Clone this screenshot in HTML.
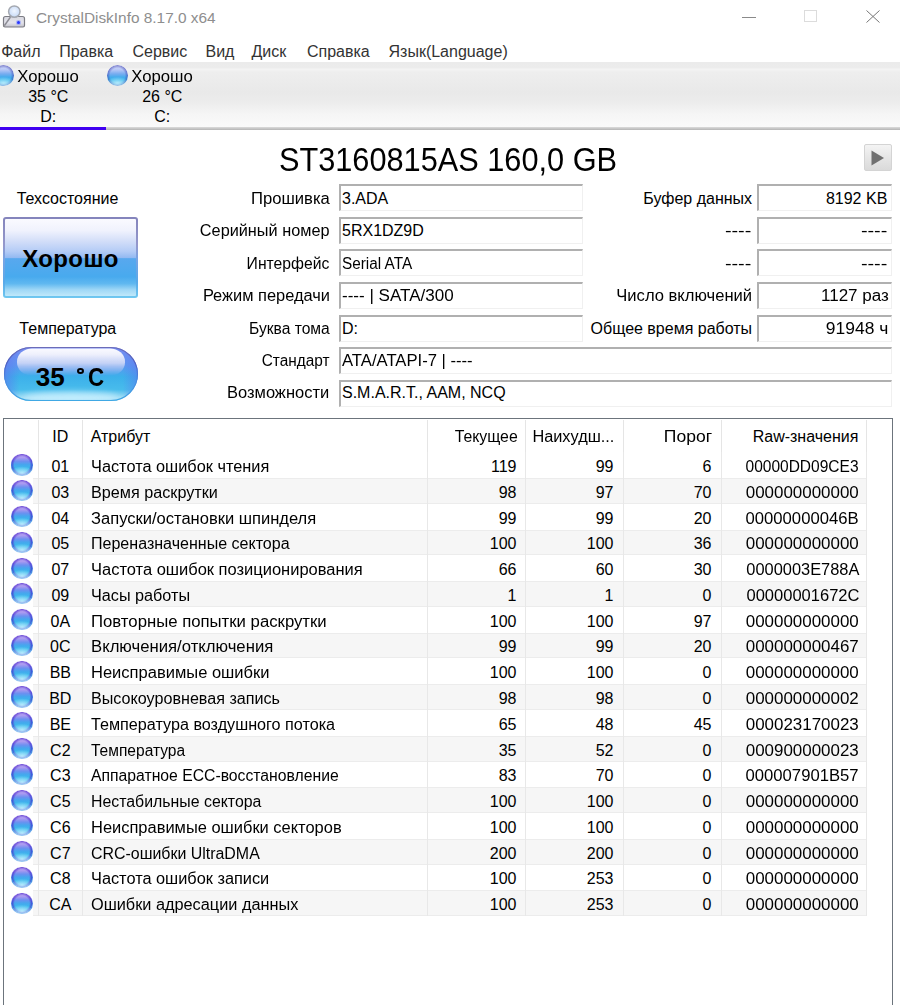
<!DOCTYPE html>
<html><head><meta charset="utf-8"><style>
html,body{margin:0;padding:0;}
body{width:900px;height:1005px;overflow:hidden;position:relative;background:#fff;font-family:"Liberation Sans", sans-serif;}
.t{position:absolute;white-space:pre;}
.r{position:absolute;}
.ball{position:absolute;border-radius:50%;box-sizing:border-box;
 background:radial-gradient(ellipse 55% 30% at 50% 86%, rgba(200,242,255,0.85), rgba(200,242,255,0) 100%),
 radial-gradient(circle closest-side at 50% 48%, rgba(70,30,200,0) 72%, rgba(70,30,200,0.6) 96%, rgba(70,30,200,0.3) 100%),
 linear-gradient(#d0bcf8 0%,#a898f0 18%,#6c90f0 34%,#46a6ee 48%,#3cb8ec 64%,#50c4f0 82%,#80d4f4 100%);}
.tball{position:absolute;width:21px;height:21px;border-radius:50%;
 background:radial-gradient(ellipse 55% 30% at 50% 86%, rgba(200,242,255,0.8), rgba(200,242,255,0) 100%),
 radial-gradient(circle closest-side at 50% 50%, rgba(60,60,170,0) 70%, rgba(60,60,170,0.5) 95%, rgba(60,60,170,0.2) 100%),
 linear-gradient(#d4dafa 0%,#b8c8f6 22%,#78acf0 42%,#44acec 58%,#3cb8ec 72%,#60c8f0 88%,#90d8f4 100%);}
.box{position:absolute;height:27px;box-sizing:border-box;border-top:2px solid #b0b0b0;border-left:2px solid #b0b0b0;border-right:1px solid #f0f0f0;border-bottom:1px solid #f0f0f0;}
.health{position:absolute;left:3px;top:217px;width:135px;height:81px;box-sizing:border-box;border-radius:3px;
 background:linear-gradient(#8484bc 0%,#9498cc 35%,#78a4e4 52%,#58a8e8 80%,#70c8f0 100%);}
.health::after{content:"";position:absolute;left:2px;top:2px;right:2px;bottom:2px;border-radius:1px;
 background:linear-gradient(#fafaff 0%,#f0f2fd 15%,#d0dcf8 30%,#b4ccf6 42%,#94baf2 50%,#58a8ee 51.5%,#48aaee 75%,#60b8f0 84%,#a0d8f6 92%,#c0e8fa 100%);}
.pill{position:absolute;left:4px;top:347px;width:134px;height:53px;box-sizing:border-box;border-radius:27px;overflow:hidden;
 border:1px solid #6060c8;border-bottom-color:#50b0e8;
 background:radial-gradient(ellipse 70% 45% at 50% 100%, rgba(190,235,250,0.95), rgba(190,235,250,0) 100%),linear-gradient(90deg, rgba(100,100,240,0.55) 0%, rgba(100,100,240,0) 20%, rgba(100,100,240,0) 80%, rgba(100,100,240,0.45) 100%), linear-gradient(#8a9cf0 0%,#6aa0f0 35%,#3cb4ea 55%,#48c0ec 75%,#a0dcf6 100%);}
.pill .hl{position:absolute;left:14px;top:2px;width:104px;height:24px;border-radius:0 0 52px 52px / 0 0 20px 20px;
 background:linear-gradient(#f8f8ff 0%,#e8ecfc 40%,#b8ccf6 100%);border-radius:40px 40px 60px 60px/ 12px 12px 16px 16px;}
.band{position:absolute;left:32.5px;width:834px;box-sizing:border-box;background:#f6f6f6;border-top:1px solid #ececec;border-bottom:1px solid #ececec;}
</style></head><body>
<svg class="r" style="left:0;top:0" width="30" height="32" viewBox="0 0 30 32">
<defs>
<linearGradient id="dk" x1="0" y1="0" x2="0" y2="1"><stop offset="0" stop-color="#d8d8e0"/><stop offset="0.6" stop-color="#e4e4ec"/><stop offset="1" stop-color="#c0c0c8"/></linearGradient>
<radialGradient id="gl" cx="0.5" cy="0.45" r="0.6"><stop offset="0" stop-color="#f0f6ff"/><stop offset="0.7" stop-color="#d0e0f8"/><stop offset="1" stop-color="#b0c8ec"/></radialGradient>
</defs>
<path d="M3.5 18.5 Q3.5 16.5 5.5 16.5 L22.5 16.5 Q24.5 16.5 24.5 18.5 L24.5 25.5 Q24.5 27 23 27 L5 27 Q3.5 27 3.5 25.5 Z" fill="url(#dk)" stroke="#7c7c84" stroke-width="1.2"/>
<path d="M4 25 L4 27" stroke="#888" stroke-width="1"/>
<path d="M4.5 25.5 L10.5 17" stroke="#8c8c94" stroke-width="1.4"/>
<circle cx="14.3" cy="11.6" r="5.7" fill="url(#gl)" stroke="#a4a8b0" stroke-width="1.5"/>
<circle cx="18.5" cy="22.5" r="2.6" fill="#7080ff" opacity="0.45"/>
<circle cx="18.5" cy="22.5" r="1.5" fill="#2838ff"/>
</svg>
<div class="t" style="top:10.46px;font-size:15.4px;line-height:15.4px;color:#8e8e8e;left:36.00px;">CrystalDiskInfo 8.17.0 x64</div>
<div class="r" style="left:742px;top:16.5px;width:14px;height:1px;background:#8a8a8a"></div>
<div class="r" style="left:804px;top:10px;width:13px;height:12px;border:1px solid #dcdcdc;box-sizing:border-box"></div>
<svg class="r" style="left:866px;top:10px" width="14" height="13" viewBox="0 0 14 13"><path d="M0.5 0.5 L13.5 12.5 M13.5 0.5 L0.5 12.5" stroke="#777" stroke-width="1"/></svg>
<div class="t" style="top:43.95px;font-size:16px;line-height:16px;color:#333;left:1.20px;">Файл</div>
<div class="t" style="top:43.95px;font-size:16px;line-height:16px;color:#333;left:59.20px;">Правка</div>
<div class="t" style="top:43.95px;font-size:16px;line-height:16px;color:#333;left:132.50px;">Сервис</div>
<div class="t" style="top:43.95px;font-size:16px;line-height:16px;color:#333;left:205.50px;">Вид</div>
<div class="t" style="top:43.95px;font-size:16px;line-height:16px;color:#333;left:251.50px;">Диск</div>
<div class="t" style="top:43.95px;font-size:16px;line-height:16px;color:#333;left:307.00px;">Справка</div>
<div class="t" style="top:43.95px;font-size:16px;line-height:16px;color:#333;left:388.50px;">Язык(Language)</div>
<div class="r" style="left:0px;top:62px;width:900px;height:65px;background:linear-gradient(#ebebeb 0px,#ececec 6px,#f4f4f4 7px,#eeeeee 10px,#e9e9e9 30px,#ececec 40px,#f5f5f5 52px,#fafafa 65px)"></div>
<div class="r" style="left:0px;top:127px;width:900px;height:3px;background:linear-gradient(#dcdcdc,#b4b4b4)"></div>
<div class="r" style="left:0px;top:127px;width:106px;height:3px;background:#4000f0"></div>
<div class="t" style="top:68.95px;font-size:16px;line-height:16px;color:#000;left:-251.70px;width:600px;text-align:center;transform:scaleX(1.045);">Хорошо</div>
<div class="t" style="top:88.95px;font-size:16px;line-height:16px;color:#000;left:-251.70px;width:600px;text-align:center;">35 °C</div>
<div class="t" style="top:108.95px;font-size:16px;line-height:16px;color:#000;left:-251.70px;width:600px;text-align:center;">D:</div>
<div class="t" style="top:68.95px;font-size:16px;line-height:16px;color:#000;left:-137.70px;width:600px;text-align:center;transform:scaleX(1.045);">Хорошо</div>
<div class="t" style="top:88.95px;font-size:16px;line-height:16px;color:#000;left:-137.70px;width:600px;text-align:center;">26 °C</div>
<div class="t" style="top:108.95px;font-size:16px;line-height:16px;color:#000;left:-137.70px;width:600px;text-align:center;">C:</div>
<div class="tball" style="left:-7.5px;top:65.3px"></div>
<div class="tball" style="left:106.5px;top:65.3px"></div>
<div class="t" style="top:143.14px;font-size:33.5px;line-height:33.5px;color:#000;left:147.50px;width:600px;text-align:center;transform:scaleX(0.917);">ST3160815AS 160,0 GB</div>
<div class="r" style="left:864px;top:144px;width:28px;height:27px;border:1px solid #d4d4d4;border-radius:2px;box-sizing:border-box;background:linear-gradient(#f4f4f4,#e6e6e6 50%,#dadada)"></div>
<svg class="r" style="left:864px;top:144px" width="28" height="27"><path d="M7.5 6.5 L20 14 L7.5 21.5 Z" fill="#707070"/></svg>
<div class="t" style="top:190.95px;font-size:16px;line-height:16px;color:#000;left:-232.50px;width:600px;text-align:center;">Техсостояние</div>
<div class="health"></div>
<div class="t" style="top:247.18px;font-size:24px;line-height:24px;color:#000;font-weight:bold;letter-spacing:0.4px;left:-229.50px;width:600px;text-align:center;">Хорошо</div>
<div class="t" style="top:320.95px;font-size:16px;line-height:16px;color:#000;left:-232.20px;width:600px;text-align:center;">Температура</div>
<svg class="r" style="left:3px;top:346px" width="136" height="56" viewBox="0 0 136 56">
<defs>
<linearGradient id="pb" x1="0" y1="0" x2="0" y2="1">
 <stop offset="0" stop-color="#7888f0"/><stop offset="0.35" stop-color="#5c98f0"/><stop offset="0.55" stop-color="#3cb0ea"/><stop offset="0.78" stop-color="#48bcec"/><stop offset="0.93" stop-color="#a8e0f6"/><stop offset="1" stop-color="#70c4f0"/>
</linearGradient>
<linearGradient id="ps" x1="0" y1="0" x2="1" y2="0">
 <stop offset="0" stop-color="#6070f0" stop-opacity="0.6"/><stop offset="0.12" stop-color="#6070f0" stop-opacity="0"/><stop offset="0.88" stop-color="#6070f0" stop-opacity="0"/><stop offset="1" stop-color="#6070f0" stop-opacity="0.5"/>
</linearGradient>
<linearGradient id="ph" x1="0" y1="0" x2="0" y2="1">
 <stop offset="0" stop-color="#fafaff"/><stop offset="0.22" stop-color="#eef0fc"/><stop offset="0.55" stop-color="#c8d4f6" stop-opacity="0.95"/><stop offset="0.8" stop-color="#a0bef2" stop-opacity="0.6"/><stop offset="1" stop-color="#90b8f0" stop-opacity="0"/>
</linearGradient>
<linearGradient id="pst" x1="0" y1="0" x2="0" y2="1">
 <stop offset="0" stop-color="#6c6cb8"/><stop offset="0.3" stop-color="#5060c0"/><stop offset="0.6" stop-color="#4c88e0"/><stop offset="1" stop-color="#40a8e4"/>
</linearGradient>
<filter id="bl" x="-10%" y="-30%" width="120%" height="160%"><feGaussianBlur stdDeviation="0.7"/></filter>
<filter id="bl2" x="-20%" y="-50%" width="140%" height="200%"><feGaussianBlur stdDeviation="3"/></filter>
<clipPath id="pc"><rect x="1" y="1" width="134" height="54" rx="27" ry="27"/></clipPath>
</defs>
<g clip-path="url(#pc)">
<rect x="0" y="0" width="136" height="56" fill="url(#pb)"/>
<rect x="0" y="0" width="136" height="56" fill="url(#ps)"/>
<ellipse cx="68" cy="52" rx="48" ry="6" fill="#c8f0ff" opacity="0.8" filter="url(#bl2)"/>
<rect x="14" y="2.5" width="108" height="27" rx="15" ry="13" fill="url(#ph)" filter="url(#bl)"/>
</g>
<rect x="1.5" y="1.5" width="133" height="53" rx="26.5" ry="26.5" fill="none" stroke="url(#pst)" stroke-width="1.1"/>
</svg>
<div class="t" style="top:364.09px;font-size:26px;line-height:26px;color:#000;font-weight:bold;left:35.80px;">35</div>
<div class="r" style="left:77px;top:367.6px;width:7.4px;height:6.6px;border:2px solid #000;border-radius:50%;box-sizing:border-box"></div>
<div class="t" style="top:364.09px;font-size:26px;line-height:26px;color:#000;font-weight:bold;left:87.60px;transform:scaleX(0.86);transform-origin:0 0;">C</div>
<div class="t" style="top:190.95px;font-size:16px;line-height:16px;color:#000;right:570.50px;transform:scaleX(1.039);transform-origin:100% 0;">Прошивка</div>
<div class="box" style="left:339px;top:184.20px;width:244px"></div>
<div class="t" style="top:190.95px;font-size:16px;line-height:16px;color:#000;left:342.00px;">3.ADA</div>
<div class="t" style="top:190.95px;font-size:16px;line-height:16px;color:#000;right:147.90px;transform:scaleX(1.0);transform-origin:100% 0;">Буфер данных</div>
<div class="box" style="left:757px;top:184.20px;width:135px"></div>
<div class="t" style="top:190.95px;font-size:16px;line-height:16px;color:#000;right:12.70px;transform:scaleX(1);transform-origin:100% 0;">8192 KB</div>
<div class="t" style="top:223.35px;font-size:16px;line-height:16px;color:#000;right:570.50px;transform:scaleX(1.017);transform-origin:100% 0;">Серийный номер</div>
<div class="box" style="left:339px;top:216.80px;width:244px"></div>
<div class="t" style="top:223.35px;font-size:16px;line-height:16px;color:#000;left:342.00px;">5RX1DZ9D</div>
<div class="t" style="top:223.35px;font-size:16px;line-height:16px;color:#000;right:148.40px;transform:scaleX(1.24);transform-origin:100% 0;">----</div>
<div class="box" style="left:757px;top:216.80px;width:135px"></div>
<div class="t" style="top:223.35px;font-size:16px;line-height:16px;color:#000;right:12.50px;transform:scaleX(1.24);transform-origin:100% 0;">----</div>
<div class="t" style="top:255.75px;font-size:16px;line-height:16px;color:#000;right:570.50px;transform:scaleX(0.981);transform-origin:100% 0;">Интерфейс</div>
<div class="box" style="left:339px;top:249.40px;width:244px"></div>
<div class="t" style="top:255.75px;font-size:16px;line-height:16px;color:#000;left:342.00px;transform:scaleX(0.958);transform-origin:0 0;">Serial ATA</div>
<div class="t" style="top:255.75px;font-size:16px;line-height:16px;color:#000;right:148.40px;transform:scaleX(1.24);transform-origin:100% 0;">----</div>
<div class="box" style="left:757px;top:249.40px;width:135px"></div>
<div class="t" style="top:255.75px;font-size:16px;line-height:16px;color:#000;right:12.50px;transform:scaleX(1.24);transform-origin:100% 0;">----</div>
<div class="t" style="top:288.15px;font-size:16px;line-height:16px;color:#000;right:570.50px;transform:scaleX(1.025);transform-origin:100% 0;">Режим передачи</div>
<div class="box" style="left:339px;top:282.00px;width:244px"></div>
<div class="t" style="top:288.15px;font-size:16px;line-height:16px;color:#000;left:342.00px;transform:scaleX(1.064);transform-origin:0 0;">---- | SATA/300</div>
<div class="t" style="top:288.15px;font-size:16px;line-height:16px;color:#000;right:147.90px;transform:scaleX(1.036);transform-origin:100% 0;">Число включений</div>
<div class="box" style="left:757px;top:282.00px;width:135px"></div>
<div class="t" style="top:288.15px;font-size:16px;line-height:16px;color:#000;right:11.70px;transform:scaleX(1.063);transform-origin:100% 0;">1127 раз</div>
<div class="t" style="top:320.55px;font-size:16px;line-height:16px;color:#000;right:570.50px;transform:scaleX(0.976);transform-origin:100% 0;">Буква тома</div>
<div class="box" style="left:339px;top:314.60px;width:244px"></div>
<div class="t" style="top:320.55px;font-size:16px;line-height:16px;color:#000;left:342.00px;">D:</div>
<div class="t" style="top:320.55px;font-size:16px;line-height:16px;color:#000;right:147.90px;transform:scaleX(1.0);transform-origin:100% 0;">Общее время работы</div>
<div class="box" style="left:757px;top:314.60px;width:135px"></div>
<div class="t" style="top:320.55px;font-size:16px;line-height:16px;color:#000;right:11.70px;transform:scaleX(1.09);transform-origin:100% 0;">91948 ч</div>
<div class="t" style="top:352.95px;font-size:16px;line-height:16px;color:#000;right:570.50px;transform:scaleX(0.961);transform-origin:100% 0;">Стандарт</div>
<div class="box" style="left:339px;top:347.20px;width:553px"></div>
<div class="t" style="top:352.95px;font-size:16px;line-height:16px;color:#000;left:342.00px;transform:scaleX(1.04);transform-origin:0 0;">ATA/ATAPI-7 | ----</div>
<div class="t" style="top:385.35px;font-size:16px;line-height:16px;color:#000;right:570.50px;transform:scaleX(1.03);transform-origin:100% 0;">Возможности</div>
<div class="box" style="left:339px;top:379.80px;width:553px"></div>
<div class="t" style="top:385.35px;font-size:16px;line-height:16px;color:#000;left:342.00px;">S.M.A.R.T., AAM, NCQ</div>
<div class="r" style="left:3px;top:418px;width:890px;height:600px;border:1px solid #6c747c;box-sizing:border-box;border-bottom:none"></div>
<div class="r" style="left:38px;top:420px;width:1px;height:32px;background:#e5e5e5"></div>
<div class="r" style="left:81.5px;top:420px;width:1px;height:32px;background:#e5e5e5"></div>
<div class="r" style="left:427px;top:420px;width:1px;height:32px;background:#e5e5e5"></div>
<div class="r" style="left:524.5px;top:420px;width:1px;height:32px;background:#e5e5e5"></div>
<div class="r" style="left:622.5px;top:420px;width:1px;height:32px;background:#e5e5e5"></div>
<div class="r" style="left:720.5px;top:420px;width:1px;height:32px;background:#e5e5e5"></div>
<div class="r" style="left:866px;top:420px;width:1px;height:32px;background:#e5e5e5"></div>
<div class="t" style="top:428.95px;font-size:16px;line-height:16px;color:#000;left:-239.70px;width:600px;text-align:center;">ID</div>
<div class="t" style="top:428.95px;font-size:16px;line-height:16px;color:#000;left:90.70px;">Атрибут</div>
<div class="t" style="top:428.95px;font-size:16px;line-height:16px;color:#000;right:382.70px;transform:scaleX(0.99);transform-origin:100% 0;">Текущее</div>
<div class="t" style="top:428.95px;font-size:16px;line-height:16px;color:#000;right:285.40px;transform:scaleX(1.02);transform-origin:100% 0;">Наихудш...</div>
<div class="t" style="top:428.95px;font-size:16px;line-height:16px;color:#000;right:187.70px;transform:scaleX(1.095);transform-origin:100% 0;">Порог</div>
<div class="t" style="top:428.95px;font-size:16px;line-height:16px;color:#000;right:41.60px;">Raw-значения</div>
<div class="r" style="left:38px;top:452.20px;width:1px;height:25.78px;background:#e8e8e8"></div>
<div class="r" style="left:81.5px;top:452.20px;width:1px;height:25.78px;background:#e8e8e8"></div>
<div class="r" style="left:427px;top:452.20px;width:1px;height:25.78px;background:#e8e8e8"></div>
<div class="r" style="left:524.5px;top:452.20px;width:1px;height:25.78px;background:#e8e8e8"></div>
<div class="r" style="left:622.5px;top:452.20px;width:1px;height:25.78px;background:#e8e8e8"></div>
<div class="r" style="left:720.5px;top:452.20px;width:1px;height:25.78px;background:#e8e8e8"></div>
<div class="r" style="left:866px;top:452.20px;width:1px;height:25.78px;background:#e8e8e8"></div>
<div class="ball" style="left:11.35px;top:454.39px;width:21.2px;height:21.2px"></div>
<div class="t" style="top:458.95px;font-size:16px;line-height:16px;color:#000;left:-239.70px;width:600px;text-align:center;">01</div>
<div class="t" style="top:458.95px;font-size:16px;line-height:16px;color:#000;left:90.70px;transform:scaleX(1.0202);transform-origin:0 0;">Частота ошибок чтения</div>
<div class="t" style="top:458.95px;font-size:16px;line-height:16px;color:#000;right:383.50px;">119</div>
<div class="t" style="top:458.95px;font-size:16px;line-height:16px;color:#000;right:286.50px;">99</div>
<div class="t" style="top:458.95px;font-size:16px;line-height:16px;color:#000;right:188.50px;">6</div>
<div class="t" style="top:458.95px;font-size:16px;line-height:16px;color:#000;right:41.00px;transform:scaleX(0.9698);transform-origin:100% 0;">00000DD09CE3</div>
<div class="band" style="top:477.98px;height:25.78px"></div>
<div class="r" style="left:38px;top:477.98px;width:1px;height:25.78px;background:#e8e8e8"></div>
<div class="r" style="left:81.5px;top:477.98px;width:1px;height:25.78px;background:#e8e8e8"></div>
<div class="r" style="left:427px;top:477.98px;width:1px;height:25.78px;background:#e8e8e8"></div>
<div class="r" style="left:524.5px;top:477.98px;width:1px;height:25.78px;background:#e8e8e8"></div>
<div class="r" style="left:622.5px;top:477.98px;width:1px;height:25.78px;background:#e8e8e8"></div>
<div class="r" style="left:720.5px;top:477.98px;width:1px;height:25.78px;background:#e8e8e8"></div>
<div class="r" style="left:866px;top:477.98px;width:1px;height:25.78px;background:#e8e8e8"></div>
<div class="ball" style="left:11.35px;top:480.17px;width:21.2px;height:21.2px"></div>
<div class="t" style="top:484.73px;font-size:16px;line-height:16px;color:#000;left:-239.70px;width:600px;text-align:center;">03</div>
<div class="t" style="top:484.73px;font-size:16px;line-height:16px;color:#000;left:90.70px;transform:scaleX(1.0122);transform-origin:0 0;">Время раскрутки</div>
<div class="t" style="top:484.73px;font-size:16px;line-height:16px;color:#000;right:383.50px;">98</div>
<div class="t" style="top:484.73px;font-size:16px;line-height:16px;color:#000;right:286.50px;">97</div>
<div class="t" style="top:484.73px;font-size:16px;line-height:16px;color:#000;right:188.50px;">70</div>
<div class="t" style="top:484.73px;font-size:16px;line-height:16px;color:#000;right:41.00px;transform:scaleX(1.0582);transform-origin:100% 0;">000000000000</div>
<div class="r" style="left:38px;top:503.76px;width:1px;height:25.78px;background:#e8e8e8"></div>
<div class="r" style="left:81.5px;top:503.76px;width:1px;height:25.78px;background:#e8e8e8"></div>
<div class="r" style="left:427px;top:503.76px;width:1px;height:25.78px;background:#e8e8e8"></div>
<div class="r" style="left:524.5px;top:503.76px;width:1px;height:25.78px;background:#e8e8e8"></div>
<div class="r" style="left:622.5px;top:503.76px;width:1px;height:25.78px;background:#e8e8e8"></div>
<div class="r" style="left:720.5px;top:503.76px;width:1px;height:25.78px;background:#e8e8e8"></div>
<div class="r" style="left:866px;top:503.76px;width:1px;height:25.78px;background:#e8e8e8"></div>
<div class="ball" style="left:11.35px;top:505.95px;width:21.2px;height:21.2px"></div>
<div class="t" style="top:510.51px;font-size:16px;line-height:16px;color:#000;left:-239.70px;width:600px;text-align:center;">04</div>
<div class="t" style="top:510.51px;font-size:16px;line-height:16px;color:#000;left:90.70px;transform:scaleX(1.0332);transform-origin:0 0;">Запуски/остановки шпинделя</div>
<div class="t" style="top:510.51px;font-size:16px;line-height:16px;color:#000;right:383.50px;">99</div>
<div class="t" style="top:510.51px;font-size:16px;line-height:16px;color:#000;right:286.50px;">99</div>
<div class="t" style="top:510.51px;font-size:16px;line-height:16px;color:#000;right:188.50px;">20</div>
<div class="t" style="top:510.51px;font-size:16px;line-height:16px;color:#000;right:41.00px;transform:scaleX(1.0409);transform-origin:100% 0;">00000000046B</div>
<div class="band" style="top:529.54px;height:25.78px"></div>
<div class="r" style="left:38px;top:529.54px;width:1px;height:25.78px;background:#e8e8e8"></div>
<div class="r" style="left:81.5px;top:529.54px;width:1px;height:25.78px;background:#e8e8e8"></div>
<div class="r" style="left:427px;top:529.54px;width:1px;height:25.78px;background:#e8e8e8"></div>
<div class="r" style="left:524.5px;top:529.54px;width:1px;height:25.78px;background:#e8e8e8"></div>
<div class="r" style="left:622.5px;top:529.54px;width:1px;height:25.78px;background:#e8e8e8"></div>
<div class="r" style="left:720.5px;top:529.54px;width:1px;height:25.78px;background:#e8e8e8"></div>
<div class="r" style="left:866px;top:529.54px;width:1px;height:25.78px;background:#e8e8e8"></div>
<div class="ball" style="left:11.35px;top:531.73px;width:21.2px;height:21.2px"></div>
<div class="t" style="top:536.29px;font-size:16px;line-height:16px;color:#000;left:-239.70px;width:600px;text-align:center;">05</div>
<div class="t" style="top:536.29px;font-size:16px;line-height:16px;color:#000;left:90.70px;transform:scaleX(1.0025);transform-origin:0 0;">Переназначенные сектора</div>
<div class="t" style="top:536.29px;font-size:16px;line-height:16px;color:#000;right:383.50px;">100</div>
<div class="t" style="top:536.29px;font-size:16px;line-height:16px;color:#000;right:286.50px;">100</div>
<div class="t" style="top:536.29px;font-size:16px;line-height:16px;color:#000;right:188.50px;">36</div>
<div class="t" style="top:536.29px;font-size:16px;line-height:16px;color:#000;right:41.00px;transform:scaleX(1.0582);transform-origin:100% 0;">000000000000</div>
<div class="r" style="left:38px;top:555.32px;width:1px;height:25.78px;background:#e8e8e8"></div>
<div class="r" style="left:81.5px;top:555.32px;width:1px;height:25.78px;background:#e8e8e8"></div>
<div class="r" style="left:427px;top:555.32px;width:1px;height:25.78px;background:#e8e8e8"></div>
<div class="r" style="left:524.5px;top:555.32px;width:1px;height:25.78px;background:#e8e8e8"></div>
<div class="r" style="left:622.5px;top:555.32px;width:1px;height:25.78px;background:#e8e8e8"></div>
<div class="r" style="left:720.5px;top:555.32px;width:1px;height:25.78px;background:#e8e8e8"></div>
<div class="r" style="left:866px;top:555.32px;width:1px;height:25.78px;background:#e8e8e8"></div>
<div class="ball" style="left:11.35px;top:557.51px;width:21.2px;height:21.2px"></div>
<div class="t" style="top:562.07px;font-size:16px;line-height:16px;color:#000;left:-239.70px;width:600px;text-align:center;">07</div>
<div class="t" style="top:562.07px;font-size:16px;line-height:16px;color:#000;left:90.70px;transform:scaleX(1.0298);transform-origin:0 0;">Частота ошибок позиционирования</div>
<div class="t" style="top:562.07px;font-size:16px;line-height:16px;color:#000;right:383.50px;">66</div>
<div class="t" style="top:562.07px;font-size:16px;line-height:16px;color:#000;right:286.50px;">60</div>
<div class="t" style="top:562.07px;font-size:16px;line-height:16px;color:#000;right:188.50px;">30</div>
<div class="t" style="top:562.07px;font-size:16px;line-height:16px;color:#000;right:41.00px;transform:scaleX(1.0242);transform-origin:100% 0;">0000003E788A</div>
<div class="band" style="top:581.10px;height:25.78px"></div>
<div class="r" style="left:38px;top:581.10px;width:1px;height:25.78px;background:#e8e8e8"></div>
<div class="r" style="left:81.5px;top:581.10px;width:1px;height:25.78px;background:#e8e8e8"></div>
<div class="r" style="left:427px;top:581.10px;width:1px;height:25.78px;background:#e8e8e8"></div>
<div class="r" style="left:524.5px;top:581.10px;width:1px;height:25.78px;background:#e8e8e8"></div>
<div class="r" style="left:622.5px;top:581.10px;width:1px;height:25.78px;background:#e8e8e8"></div>
<div class="r" style="left:720.5px;top:581.10px;width:1px;height:25.78px;background:#e8e8e8"></div>
<div class="r" style="left:866px;top:581.10px;width:1px;height:25.78px;background:#e8e8e8"></div>
<div class="ball" style="left:11.35px;top:583.29px;width:21.2px;height:21.2px"></div>
<div class="t" style="top:587.85px;font-size:16px;line-height:16px;color:#000;left:-239.70px;width:600px;text-align:center;">09</div>
<div class="t" style="top:587.85px;font-size:16px;line-height:16px;color:#000;left:90.70px;transform:scaleX(1.0125);transform-origin:0 0;">Часы работы</div>
<div class="t" style="top:587.85px;font-size:16px;line-height:16px;color:#000;right:383.50px;">1</div>
<div class="t" style="top:587.85px;font-size:16px;line-height:16px;color:#000;right:286.50px;">1</div>
<div class="t" style="top:587.85px;font-size:16px;line-height:16px;color:#000;right:188.50px;">0</div>
<div class="t" style="top:587.85px;font-size:16px;line-height:16px;color:#000;right:41.00px;transform:scaleX(1.0325);transform-origin:100% 0;">00000001672C</div>
<div class="r" style="left:38px;top:606.88px;width:1px;height:25.78px;background:#e8e8e8"></div>
<div class="r" style="left:81.5px;top:606.88px;width:1px;height:25.78px;background:#e8e8e8"></div>
<div class="r" style="left:427px;top:606.88px;width:1px;height:25.78px;background:#e8e8e8"></div>
<div class="r" style="left:524.5px;top:606.88px;width:1px;height:25.78px;background:#e8e8e8"></div>
<div class="r" style="left:622.5px;top:606.88px;width:1px;height:25.78px;background:#e8e8e8"></div>
<div class="r" style="left:720.5px;top:606.88px;width:1px;height:25.78px;background:#e8e8e8"></div>
<div class="r" style="left:866px;top:606.88px;width:1px;height:25.78px;background:#e8e8e8"></div>
<div class="ball" style="left:11.35px;top:609.07px;width:21.2px;height:21.2px"></div>
<div class="t" style="top:613.63px;font-size:16px;line-height:16px;color:#000;left:-239.70px;width:600px;text-align:center;">0A</div>
<div class="t" style="top:613.63px;font-size:16px;line-height:16px;color:#000;left:90.70px;transform:scaleX(1.0457);transform-origin:0 0;">Повторные попытки раскрутки</div>
<div class="t" style="top:613.63px;font-size:16px;line-height:16px;color:#000;right:383.50px;">100</div>
<div class="t" style="top:613.63px;font-size:16px;line-height:16px;color:#000;right:286.50px;">100</div>
<div class="t" style="top:613.63px;font-size:16px;line-height:16px;color:#000;right:188.50px;">97</div>
<div class="t" style="top:613.63px;font-size:16px;line-height:16px;color:#000;right:41.00px;transform:scaleX(1.0582);transform-origin:100% 0;">000000000000</div>
<div class="band" style="top:632.66px;height:25.78px"></div>
<div class="r" style="left:38px;top:632.66px;width:1px;height:25.78px;background:#e8e8e8"></div>
<div class="r" style="left:81.5px;top:632.66px;width:1px;height:25.78px;background:#e8e8e8"></div>
<div class="r" style="left:427px;top:632.66px;width:1px;height:25.78px;background:#e8e8e8"></div>
<div class="r" style="left:524.5px;top:632.66px;width:1px;height:25.78px;background:#e8e8e8"></div>
<div class="r" style="left:622.5px;top:632.66px;width:1px;height:25.78px;background:#e8e8e8"></div>
<div class="r" style="left:720.5px;top:632.66px;width:1px;height:25.78px;background:#e8e8e8"></div>
<div class="r" style="left:866px;top:632.66px;width:1px;height:25.78px;background:#e8e8e8"></div>
<div class="ball" style="left:11.35px;top:634.85px;width:21.2px;height:21.2px"></div>
<div class="t" style="top:639.41px;font-size:16px;line-height:16px;color:#000;left:-239.70px;width:600px;text-align:center;">0C</div>
<div class="t" style="top:639.41px;font-size:16px;line-height:16px;color:#000;left:90.70px;transform:scaleX(1.0434);transform-origin:0 0;">Включения/отключения</div>
<div class="t" style="top:639.41px;font-size:16px;line-height:16px;color:#000;right:383.50px;">99</div>
<div class="t" style="top:639.41px;font-size:16px;line-height:16px;color:#000;right:286.50px;">99</div>
<div class="t" style="top:639.41px;font-size:16px;line-height:16px;color:#000;right:188.50px;">20</div>
<div class="t" style="top:639.41px;font-size:16px;line-height:16px;color:#000;right:41.00px;transform:scaleX(1.0582);transform-origin:100% 0;">000000000467</div>
<div class="r" style="left:38px;top:658.44px;width:1px;height:25.78px;background:#e8e8e8"></div>
<div class="r" style="left:81.5px;top:658.44px;width:1px;height:25.78px;background:#e8e8e8"></div>
<div class="r" style="left:427px;top:658.44px;width:1px;height:25.78px;background:#e8e8e8"></div>
<div class="r" style="left:524.5px;top:658.44px;width:1px;height:25.78px;background:#e8e8e8"></div>
<div class="r" style="left:622.5px;top:658.44px;width:1px;height:25.78px;background:#e8e8e8"></div>
<div class="r" style="left:720.5px;top:658.44px;width:1px;height:25.78px;background:#e8e8e8"></div>
<div class="r" style="left:866px;top:658.44px;width:1px;height:25.78px;background:#e8e8e8"></div>
<div class="ball" style="left:11.35px;top:660.63px;width:21.2px;height:21.2px"></div>
<div class="t" style="top:665.19px;font-size:16px;line-height:16px;color:#000;left:-239.70px;width:600px;text-align:center;">BB</div>
<div class="t" style="top:665.19px;font-size:16px;line-height:16px;color:#000;left:90.70px;transform:scaleX(1.0322);transform-origin:0 0;">Неисправимые ошибки</div>
<div class="t" style="top:665.19px;font-size:16px;line-height:16px;color:#000;right:383.50px;">100</div>
<div class="t" style="top:665.19px;font-size:16px;line-height:16px;color:#000;right:286.50px;">100</div>
<div class="t" style="top:665.19px;font-size:16px;line-height:16px;color:#000;right:188.50px;">0</div>
<div class="t" style="top:665.19px;font-size:16px;line-height:16px;color:#000;right:41.00px;transform:scaleX(1.0582);transform-origin:100% 0;">000000000000</div>
<div class="band" style="top:684.22px;height:25.78px"></div>
<div class="r" style="left:38px;top:684.22px;width:1px;height:25.78px;background:#e8e8e8"></div>
<div class="r" style="left:81.5px;top:684.22px;width:1px;height:25.78px;background:#e8e8e8"></div>
<div class="r" style="left:427px;top:684.22px;width:1px;height:25.78px;background:#e8e8e8"></div>
<div class="r" style="left:524.5px;top:684.22px;width:1px;height:25.78px;background:#e8e8e8"></div>
<div class="r" style="left:622.5px;top:684.22px;width:1px;height:25.78px;background:#e8e8e8"></div>
<div class="r" style="left:720.5px;top:684.22px;width:1px;height:25.78px;background:#e8e8e8"></div>
<div class="r" style="left:866px;top:684.22px;width:1px;height:25.78px;background:#e8e8e8"></div>
<div class="ball" style="left:11.35px;top:686.41px;width:21.2px;height:21.2px"></div>
<div class="t" style="top:690.97px;font-size:16px;line-height:16px;color:#000;left:-239.70px;width:600px;text-align:center;">BD</div>
<div class="t" style="top:690.97px;font-size:16px;line-height:16px;color:#000;left:90.70px;transform:scaleX(1.0081);transform-origin:0 0;">Высокоуровневая запись</div>
<div class="t" style="top:690.97px;font-size:16px;line-height:16px;color:#000;right:383.50px;">98</div>
<div class="t" style="top:690.97px;font-size:16px;line-height:16px;color:#000;right:286.50px;">98</div>
<div class="t" style="top:690.97px;font-size:16px;line-height:16px;color:#000;right:188.50px;">0</div>
<div class="t" style="top:690.97px;font-size:16px;line-height:16px;color:#000;right:41.00px;transform:scaleX(1.0582);transform-origin:100% 0;">000000000002</div>
<div class="r" style="left:38px;top:710.00px;width:1px;height:25.78px;background:#e8e8e8"></div>
<div class="r" style="left:81.5px;top:710.00px;width:1px;height:25.78px;background:#e8e8e8"></div>
<div class="r" style="left:427px;top:710.00px;width:1px;height:25.78px;background:#e8e8e8"></div>
<div class="r" style="left:524.5px;top:710.00px;width:1px;height:25.78px;background:#e8e8e8"></div>
<div class="r" style="left:622.5px;top:710.00px;width:1px;height:25.78px;background:#e8e8e8"></div>
<div class="r" style="left:720.5px;top:710.00px;width:1px;height:25.78px;background:#e8e8e8"></div>
<div class="r" style="left:866px;top:710.00px;width:1px;height:25.78px;background:#e8e8e8"></div>
<div class="ball" style="left:11.35px;top:712.19px;width:21.2px;height:21.2px"></div>
<div class="t" style="top:716.75px;font-size:16px;line-height:16px;color:#000;left:-239.70px;width:600px;text-align:center;">BE</div>
<div class="t" style="top:716.75px;font-size:16px;line-height:16px;color:#000;left:90.70px;transform:scaleX(1.0103);transform-origin:0 0;">Температура воздушного потока</div>
<div class="t" style="top:716.75px;font-size:16px;line-height:16px;color:#000;right:383.50px;">65</div>
<div class="t" style="top:716.75px;font-size:16px;line-height:16px;color:#000;right:286.50px;">48</div>
<div class="t" style="top:716.75px;font-size:16px;line-height:16px;color:#000;right:188.50px;">45</div>
<div class="t" style="top:716.75px;font-size:16px;line-height:16px;color:#000;right:41.00px;transform:scaleX(1.0582);transform-origin:100% 0;">000023170023</div>
<div class="band" style="top:735.78px;height:25.78px"></div>
<div class="r" style="left:38px;top:735.78px;width:1px;height:25.78px;background:#e8e8e8"></div>
<div class="r" style="left:81.5px;top:735.78px;width:1px;height:25.78px;background:#e8e8e8"></div>
<div class="r" style="left:427px;top:735.78px;width:1px;height:25.78px;background:#e8e8e8"></div>
<div class="r" style="left:524.5px;top:735.78px;width:1px;height:25.78px;background:#e8e8e8"></div>
<div class="r" style="left:622.5px;top:735.78px;width:1px;height:25.78px;background:#e8e8e8"></div>
<div class="r" style="left:720.5px;top:735.78px;width:1px;height:25.78px;background:#e8e8e8"></div>
<div class="r" style="left:866px;top:735.78px;width:1px;height:25.78px;background:#e8e8e8"></div>
<div class="ball" style="left:11.35px;top:737.97px;width:21.2px;height:21.2px"></div>
<div class="t" style="top:742.53px;font-size:16px;line-height:16px;color:#000;left:-239.70px;width:600px;text-align:center;">C2</div>
<div class="t" style="top:742.53px;font-size:16px;line-height:16px;color:#000;left:90.70px;transform:scaleX(0.9711);transform-origin:0 0;">Температура</div>
<div class="t" style="top:742.53px;font-size:16px;line-height:16px;color:#000;right:383.50px;">35</div>
<div class="t" style="top:742.53px;font-size:16px;line-height:16px;color:#000;right:286.50px;">52</div>
<div class="t" style="top:742.53px;font-size:16px;line-height:16px;color:#000;right:188.50px;">0</div>
<div class="t" style="top:742.53px;font-size:16px;line-height:16px;color:#000;right:41.00px;transform:scaleX(1.0582);transform-origin:100% 0;">000900000023</div>
<div class="r" style="left:38px;top:761.56px;width:1px;height:25.78px;background:#e8e8e8"></div>
<div class="r" style="left:81.5px;top:761.56px;width:1px;height:25.78px;background:#e8e8e8"></div>
<div class="r" style="left:427px;top:761.56px;width:1px;height:25.78px;background:#e8e8e8"></div>
<div class="r" style="left:524.5px;top:761.56px;width:1px;height:25.78px;background:#e8e8e8"></div>
<div class="r" style="left:622.5px;top:761.56px;width:1px;height:25.78px;background:#e8e8e8"></div>
<div class="r" style="left:720.5px;top:761.56px;width:1px;height:25.78px;background:#e8e8e8"></div>
<div class="r" style="left:866px;top:761.56px;width:1px;height:25.78px;background:#e8e8e8"></div>
<div class="ball" style="left:11.35px;top:763.75px;width:21.2px;height:21.2px"></div>
<div class="t" style="top:768.31px;font-size:16px;line-height:16px;color:#000;left:-239.70px;width:600px;text-align:center;">C3</div>
<div class="t" style="top:768.31px;font-size:16px;line-height:16px;color:#000;left:90.70px;transform:scaleX(0.9833);transform-origin:0 0;">Аппаратное ECC-восстановление</div>
<div class="t" style="top:768.31px;font-size:16px;line-height:16px;color:#000;right:383.50px;">83</div>
<div class="t" style="top:768.31px;font-size:16px;line-height:16px;color:#000;right:286.50px;">70</div>
<div class="t" style="top:768.31px;font-size:16px;line-height:16px;color:#000;right:188.50px;">0</div>
<div class="t" style="top:768.31px;font-size:16px;line-height:16px;color:#000;right:41.00px;transform:scaleX(1.0409);transform-origin:100% 0;">000007901B57</div>
<div class="band" style="top:787.34px;height:25.78px"></div>
<div class="r" style="left:38px;top:787.34px;width:1px;height:25.78px;background:#e8e8e8"></div>
<div class="r" style="left:81.5px;top:787.34px;width:1px;height:25.78px;background:#e8e8e8"></div>
<div class="r" style="left:427px;top:787.34px;width:1px;height:25.78px;background:#e8e8e8"></div>
<div class="r" style="left:524.5px;top:787.34px;width:1px;height:25.78px;background:#e8e8e8"></div>
<div class="r" style="left:622.5px;top:787.34px;width:1px;height:25.78px;background:#e8e8e8"></div>
<div class="r" style="left:720.5px;top:787.34px;width:1px;height:25.78px;background:#e8e8e8"></div>
<div class="r" style="left:866px;top:787.34px;width:1px;height:25.78px;background:#e8e8e8"></div>
<div class="ball" style="left:11.35px;top:789.53px;width:21.2px;height:21.2px"></div>
<div class="t" style="top:794.09px;font-size:16px;line-height:16px;color:#000;left:-239.70px;width:600px;text-align:center;">C5</div>
<div class="t" style="top:794.09px;font-size:16px;line-height:16px;color:#000;left:90.70px;transform:scaleX(0.9912);transform-origin:0 0;">Нестабильные сектора</div>
<div class="t" style="top:794.09px;font-size:16px;line-height:16px;color:#000;right:383.50px;">100</div>
<div class="t" style="top:794.09px;font-size:16px;line-height:16px;color:#000;right:286.50px;">100</div>
<div class="t" style="top:794.09px;font-size:16px;line-height:16px;color:#000;right:188.50px;">0</div>
<div class="t" style="top:794.09px;font-size:16px;line-height:16px;color:#000;right:41.00px;transform:scaleX(1.0582);transform-origin:100% 0;">000000000000</div>
<div class="r" style="left:38px;top:813.12px;width:1px;height:25.78px;background:#e8e8e8"></div>
<div class="r" style="left:81.5px;top:813.12px;width:1px;height:25.78px;background:#e8e8e8"></div>
<div class="r" style="left:427px;top:813.12px;width:1px;height:25.78px;background:#e8e8e8"></div>
<div class="r" style="left:524.5px;top:813.12px;width:1px;height:25.78px;background:#e8e8e8"></div>
<div class="r" style="left:622.5px;top:813.12px;width:1px;height:25.78px;background:#e8e8e8"></div>
<div class="r" style="left:720.5px;top:813.12px;width:1px;height:25.78px;background:#e8e8e8"></div>
<div class="r" style="left:866px;top:813.12px;width:1px;height:25.78px;background:#e8e8e8"></div>
<div class="ball" style="left:11.35px;top:815.31px;width:21.2px;height:21.2px"></div>
<div class="t" style="top:819.87px;font-size:16px;line-height:16px;color:#000;left:-239.70px;width:600px;text-align:center;">C6</div>
<div class="t" style="top:819.87px;font-size:16px;line-height:16px;color:#000;left:90.70px;transform:scaleX(1.0281);transform-origin:0 0;">Неисправимые ошибки секторов</div>
<div class="t" style="top:819.87px;font-size:16px;line-height:16px;color:#000;right:383.50px;">100</div>
<div class="t" style="top:819.87px;font-size:16px;line-height:16px;color:#000;right:286.50px;">100</div>
<div class="t" style="top:819.87px;font-size:16px;line-height:16px;color:#000;right:188.50px;">0</div>
<div class="t" style="top:819.87px;font-size:16px;line-height:16px;color:#000;right:41.00px;transform:scaleX(1.0582);transform-origin:100% 0;">000000000000</div>
<div class="band" style="top:838.90px;height:25.78px"></div>
<div class="r" style="left:38px;top:838.90px;width:1px;height:25.78px;background:#e8e8e8"></div>
<div class="r" style="left:81.5px;top:838.90px;width:1px;height:25.78px;background:#e8e8e8"></div>
<div class="r" style="left:427px;top:838.90px;width:1px;height:25.78px;background:#e8e8e8"></div>
<div class="r" style="left:524.5px;top:838.90px;width:1px;height:25.78px;background:#e8e8e8"></div>
<div class="r" style="left:622.5px;top:838.90px;width:1px;height:25.78px;background:#e8e8e8"></div>
<div class="r" style="left:720.5px;top:838.90px;width:1px;height:25.78px;background:#e8e8e8"></div>
<div class="r" style="left:866px;top:838.90px;width:1px;height:25.78px;background:#e8e8e8"></div>
<div class="ball" style="left:11.35px;top:841.09px;width:21.2px;height:21.2px"></div>
<div class="t" style="top:845.65px;font-size:16px;line-height:16px;color:#000;left:-239.70px;width:600px;text-align:center;">C7</div>
<div class="t" style="top:845.65px;font-size:16px;line-height:16px;color:#000;left:90.70px;transform:scaleX(0.9953);transform-origin:0 0;">CRC-ошибки UltraDMA</div>
<div class="t" style="top:845.65px;font-size:16px;line-height:16px;color:#000;right:383.50px;">200</div>
<div class="t" style="top:845.65px;font-size:16px;line-height:16px;color:#000;right:286.50px;">200</div>
<div class="t" style="top:845.65px;font-size:16px;line-height:16px;color:#000;right:188.50px;">0</div>
<div class="t" style="top:845.65px;font-size:16px;line-height:16px;color:#000;right:41.00px;transform:scaleX(1.0582);transform-origin:100% 0;">000000000000</div>
<div class="r" style="left:38px;top:864.68px;width:1px;height:25.78px;background:#e8e8e8"></div>
<div class="r" style="left:81.5px;top:864.68px;width:1px;height:25.78px;background:#e8e8e8"></div>
<div class="r" style="left:427px;top:864.68px;width:1px;height:25.78px;background:#e8e8e8"></div>
<div class="r" style="left:524.5px;top:864.68px;width:1px;height:25.78px;background:#e8e8e8"></div>
<div class="r" style="left:622.5px;top:864.68px;width:1px;height:25.78px;background:#e8e8e8"></div>
<div class="r" style="left:720.5px;top:864.68px;width:1px;height:25.78px;background:#e8e8e8"></div>
<div class="r" style="left:866px;top:864.68px;width:1px;height:25.78px;background:#e8e8e8"></div>
<div class="ball" style="left:11.35px;top:866.87px;width:21.2px;height:21.2px"></div>
<div class="t" style="top:871.43px;font-size:16px;line-height:16px;color:#000;left:-239.70px;width:600px;text-align:center;">C8</div>
<div class="t" style="top:871.43px;font-size:16px;line-height:16px;color:#000;left:90.70px;transform:scaleX(1.0202);transform-origin:0 0;">Частота ошибок записи</div>
<div class="t" style="top:871.43px;font-size:16px;line-height:16px;color:#000;right:383.50px;">100</div>
<div class="t" style="top:871.43px;font-size:16px;line-height:16px;color:#000;right:286.50px;">253</div>
<div class="t" style="top:871.43px;font-size:16px;line-height:16px;color:#000;right:188.50px;">0</div>
<div class="t" style="top:871.43px;font-size:16px;line-height:16px;color:#000;right:41.00px;transform:scaleX(1.0582);transform-origin:100% 0;">000000000000</div>
<div class="band" style="top:890.46px;height:25.78px"></div>
<div class="r" style="left:38px;top:890.46px;width:1px;height:25.78px;background:#e8e8e8"></div>
<div class="r" style="left:81.5px;top:890.46px;width:1px;height:25.78px;background:#e8e8e8"></div>
<div class="r" style="left:427px;top:890.46px;width:1px;height:25.78px;background:#e8e8e8"></div>
<div class="r" style="left:524.5px;top:890.46px;width:1px;height:25.78px;background:#e8e8e8"></div>
<div class="r" style="left:622.5px;top:890.46px;width:1px;height:25.78px;background:#e8e8e8"></div>
<div class="r" style="left:720.5px;top:890.46px;width:1px;height:25.78px;background:#e8e8e8"></div>
<div class="r" style="left:866px;top:890.46px;width:1px;height:25.78px;background:#e8e8e8"></div>
<div class="ball" style="left:11.35px;top:892.65px;width:21.2px;height:21.2px"></div>
<div class="t" style="top:897.21px;font-size:16px;line-height:16px;color:#000;left:-239.70px;width:600px;text-align:center;">CA</div>
<div class="t" style="top:897.21px;font-size:16px;line-height:16px;color:#000;left:90.70px;transform:scaleX(1.0182);transform-origin:0 0;">Ошибки адресации данных</div>
<div class="t" style="top:897.21px;font-size:16px;line-height:16px;color:#000;right:383.50px;">100</div>
<div class="t" style="top:897.21px;font-size:16px;line-height:16px;color:#000;right:286.50px;">253</div>
<div class="t" style="top:897.21px;font-size:16px;line-height:16px;color:#000;right:188.50px;">0</div>
<div class="t" style="top:897.21px;font-size:16px;line-height:16px;color:#000;right:41.00px;transform:scaleX(1.0582);transform-origin:100% 0;">000000000000</div>
</body></html>
